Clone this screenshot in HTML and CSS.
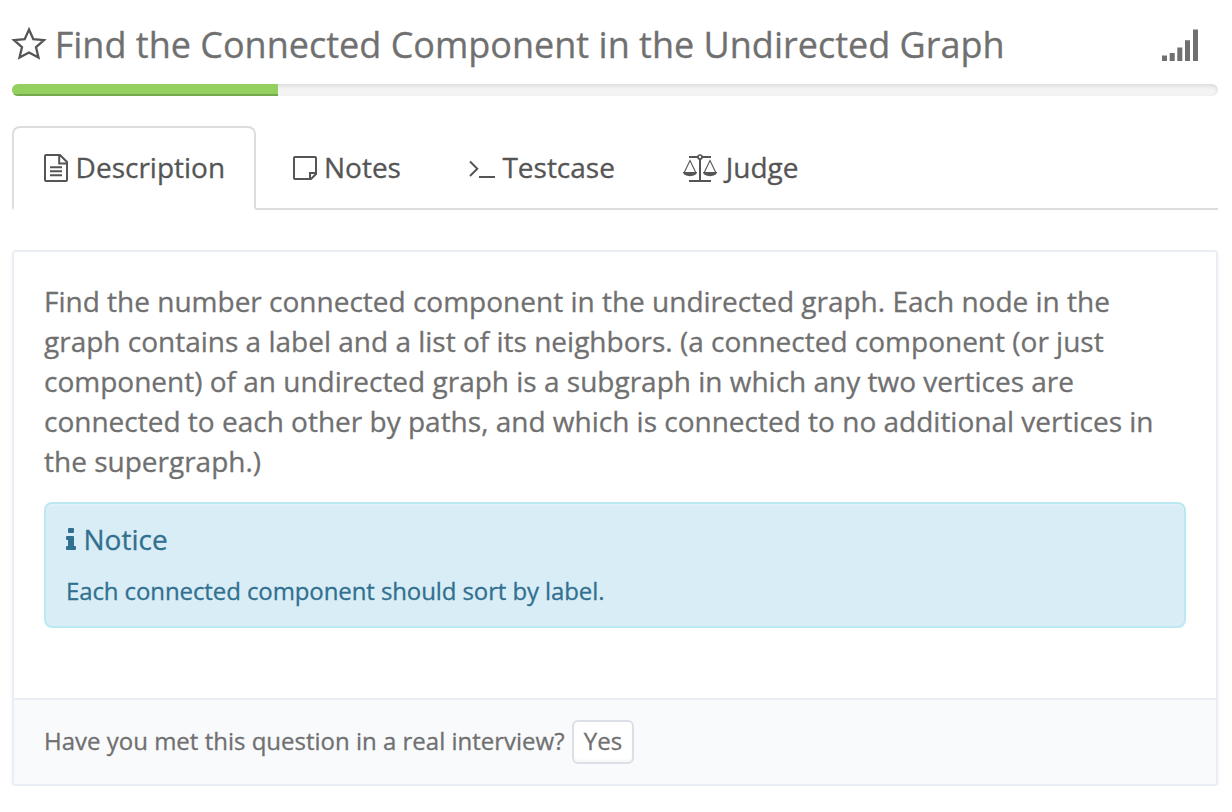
FILE: index.html
```html
<!DOCTYPE html>
<html lang="en">
<head>
<meta charset="utf-8">
<title>Find the Connected Component in the Undirected Graph</title>
<link rel="stylesheet" href="styles.css">
</head>
<body>
<header class="header">
  <svg class="star" viewBox="0 0 34 34"><path d="M17 3.500l4.300 9.700 10.700 1-8 7 2.500 10.300L17 26.500l-9.500 5L10 21.200l-8-7 10.700-1z"/></svg>
  <h1 class="title">Find the Connected Component in the Undirected Graph</h1>
  <svg class="signal" viewBox="0 0 36 32"><path d="M0 26.500h5V32H0zM7.700 24h5v8h-5zM15.300 18.500h5V32h-5zM23 11.300h5V32h-5zM31 .5h5V32h-5z"/></svg>
</header>
<div class="progress"><div class="bar"></div></div>
<nav class="tabs">
  <a class="tab tab-description active"><svg class="icon-doc" viewBox="0 0 24 28"><path d="M2 1h14l7 7v18a1 1 0 0 1-1 1H2a1 1 0 0 1-1-1V2a1 1 0 0 1 1-1zM15.200 1v8.500H23M6 13.200h12M6 17.200h12M6 21.200h12"/></svg><span>Description</span></a>
  <a class="tab tab-notes"><svg class="icon-note" viewBox="0 0 24 24"><path d="M2 1h20a1 1 0 0 1 1 1v16l-5 5H2a1 1 0 0 1-1-1V2a1 1 0 0 1 1-1zM17 23v-6h6"/></svg><span>Notes</span></a>
  <a class="tab tab-testcase"><svg class="icon-terminal" viewBox="0 0 26 18"><path d="M1 1.500l7.300 7.300L1 16M10 17h16"/></svg><span>Testcase</span></a>
  <a class="tab"><svg class="icon-scale" viewBox="0 0 34 28"><path class="beam" d="M6 3h9M19 3h9M17 5v21M6 27h22"/><circle cx="17" cy="3" r="2"/><path class="cord" d="M1 19L7 6.500 13 19M21 19l6-12.500L33 19"/><path class="pan" d="M0 18h14c0 5.500-14 5.500-14 0zM20 18h14c0 5.500-14 5.500-14 0z"/></svg><span>Judge</span></a>
</nav>
<main class="panel">
  <section class="content">
    <p class="text">Find the number connected component in the undirected graph. Each node in the<br>graph contains a label and a list of its neighbors. (a connected component (or just<br>component) of an undirected graph is a subgraph in which any two vertices are<br>connected to each other by paths, and which is connected to no additional vertices in<br>the supergraph.)</p>
    <aside class="notice">
      <h2 class="notice-title"><svg class="icon-info" viewBox="0 0 10 22"><path d="M3 0h4a1 1 0 0 1 1 1v3a1 1 0 0 1-1 1H3a1 1 0 0 1-1-1V1a1 1 0 0 1 1-1zM1 8h6a1 1 0 0 1 1 1v9h1a1 1 0 0 1 1 1v2a1 1 0 0 1-1 1H1a1 1 0 0 1-1-1v-2a1 1 0 0 1 1-1h1v-6H1a1 1 0 0 1-1-1V9a1 1 0 0 1 1-1z"/></svg><span>Notice</span></h2>
      <p class="notice-text">Each connected component should sort by label.</p>
    </aside>
  </section>
  <footer class="footer"><span class="question">Have you met this question in a real interview?</span><button class="yes" type="button">Yes</button></footer>
</main>
</body>
</html>
```
FILE: styles.css
```css
* { box-sizing: border-box; }
body {
  margin: 0;
  padding: 0 14px 0 12px;
  background: #fff;
  color: #707070;
  font-family: "Open Sans", sans-serif;
  font-size: 28px;
  line-height: 40px;
  -webkit-text-stroke: .3px currentColor;
}
h1, h2, p { margin: 0; font-weight: 400; }
svg { display: block; flex: none; overflow: visible; fill: none; stroke: #555; stroke-width: 2; }
.header { display: flex; align-items: flex-start; height: 84px; padding-top: 20px; }
.star { width: 34px; height: 34px; margin-top: 6px; stroke-width: 2.3; }
.title { margin-left: 8.7px; font-size: 36px; line-height: 50px; white-space: nowrap; }
.signal { width: 36px; height: 32px; margin: 9px 20px 0 auto; fill: #707070; stroke: none; }
.progress {
  height: 12px;
  border-radius: 6px;
  overflow: hidden;
  background: #f4f4f4;
  box-shadow: inset 0 2px 4px rgba(0, 0, 0, .1);
}
.bar { width: 266px; height: 12px; background: #94d060; box-shadow: inset 0 -2px 0 #76a84d; }
.tabs { display: flex; gap: 4px; height: 84px; margin-top: 30px; border-bottom: 2px solid #ddd; }
.tab {
  display: flex;
  height: 84px;
  padding: 19px 30px;
  border: 2px solid transparent;
  border-radius: 8px 8px 0 0;
  color: #555;
  white-space: nowrap;
}
.tab.active { background: #fff; border-color: #ddd; border-bottom-color: #fff; }
.tab-description { width: 244px; }
.tab-notes { width: 173px; }
.tab-testcase { width: 210px; }
.icon-doc { width: 24px; height: 28px; margin: 7px 7.6px 0 0; }
.icon-note { width: 24px; height: 24px; margin: 9px 7.400px 0 .6px; }
.icon-terminal { width: 26px; height: 18px; margin: 13px 7.400px 0 0; }
.icon-scale { width: 34px; height: 28px; margin: 7px 8.800px 0 0; }
.icon-scale circle { stroke-width: 1.7; }
.icon-scale .cord { stroke-width: 1.1; }
.icon-scale .pan { fill: #555; stroke: none; }
.panel {
  height: 536px;
  margin-top: 40px;
  border: 2px solid #e9eef5;
  border-radius: 4px;
  box-shadow: 0 2px 4px rgba(0, 0, 0, .05);
}
.content { height: 446px; padding: 29px 30px 30px; }
.text { white-space: nowrap; }
.notice {
  height: 126px;
  margin-top: 21px;
  padding: 15px 20px;
  border: 2px solid #bce8f1;
  border-radius: 8px;
  background: #d9edf7;
  box-shadow: inset 0 2px 0 rgba(255, 255, 255, .2);
  color: #31708f;
}
.notice-title { display: flex; font-size: 28px; line-height: 40px; }
.icon-info { width: 10px; height: 22px; margin: 9px 7.500px 0 0; fill: #31708f; stroke: none; }
.notice-text { margin-top: 15px; font-size: 24px; line-height: 34px; letter-spacing: -.1px; }
.footer {
  display: flex;
  height: 86px;
  padding: 20px 30px;
  border-top: 2px solid #e9eef5;
  background: #f9fafc;
  font-size: 24px;
}
.question { width: 521px; margin-right: 7px; line-height: 42px; white-space: nowrap; }
.yes {
  width: 62px;
  height: 44px;
  padding: 0 0 2px;
  border: 2px solid #dddfe8;
  border-radius: 6px;
  background: #fff;
  box-shadow: inset 0 -2px 3px rgba(0, 0, 0, .04);
  color: #707070;
  font: 24px/38px "Open Sans", sans-serif;
}
```
